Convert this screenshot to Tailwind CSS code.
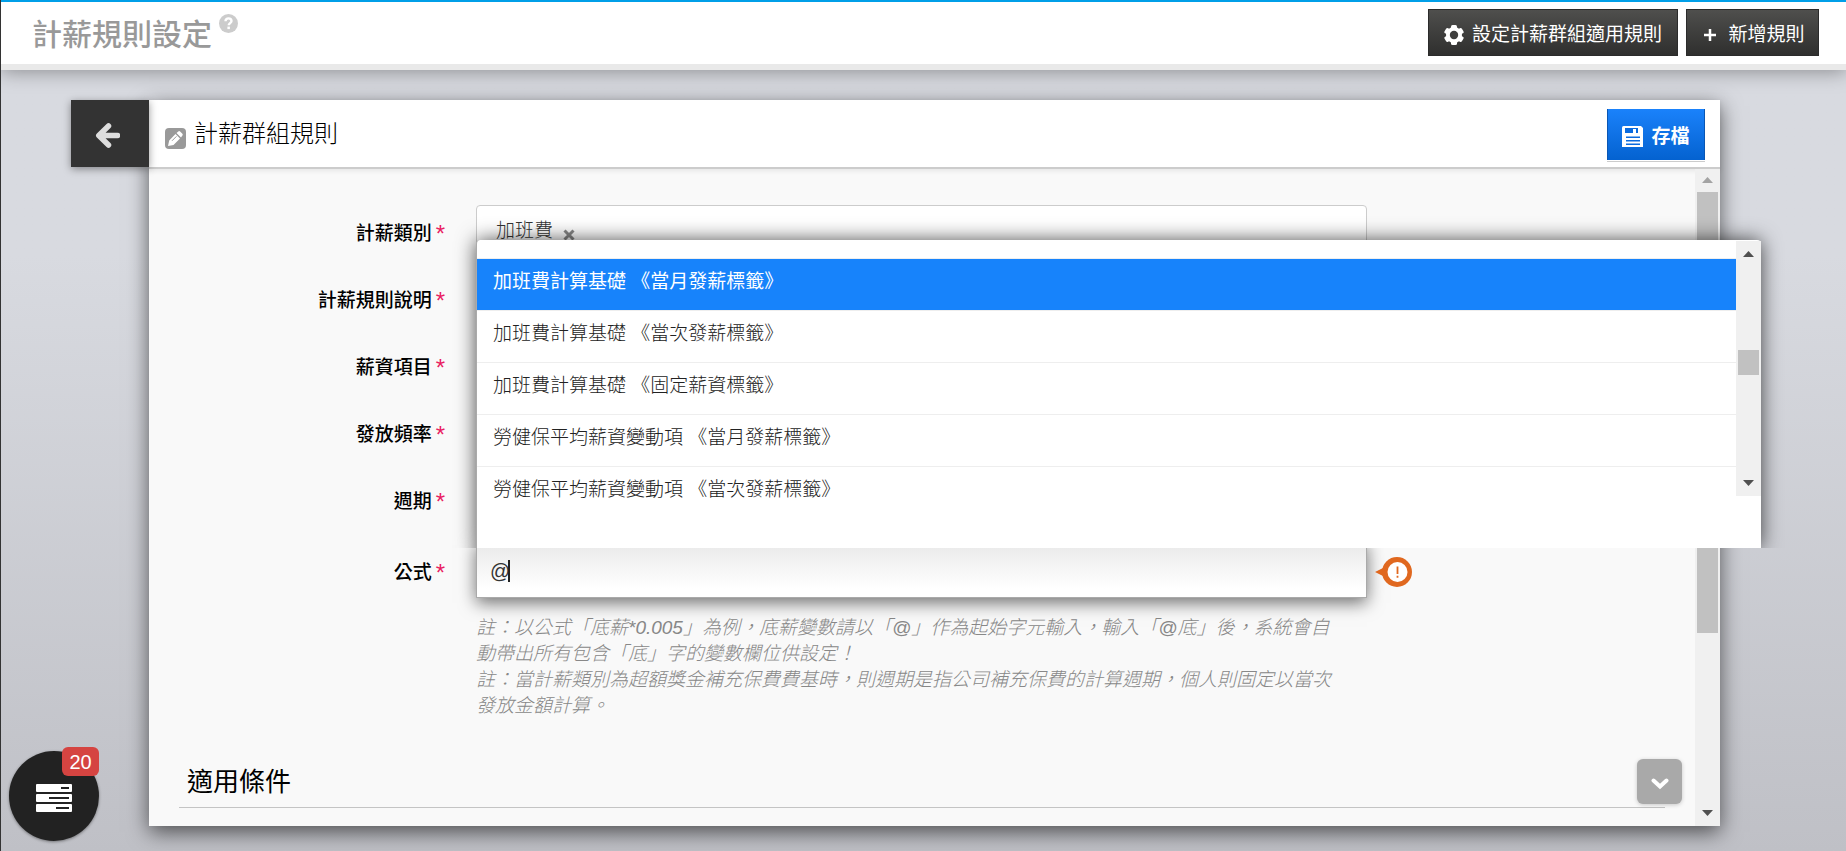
<!DOCTYPE html>
<html lang="zh-Hant">
<head>
    <meta charset="UTF-8">
    <meta name="viewport" content="width=device-width, initial-scale=1.0">
    <title>計薪規則設定</title>
    <script src="https://cdn.jsdelivr.net/npm/@tailwindcss/browser@4"></script>
</head>
<body class="font-['Liberation_Sans','Noto_Sans_CJK_TC',sans-serif] text-[19px] leading-[26px] text-black">
    <div class="flex h-screen flex-col overflow-hidden border-l border-[#333] bg-linear-to-b from-[#d8dae0] from-30% to-[#bfc0c6]">

        <!-- 頁首 -->
        <header class="relative flex h-[70px] shrink-0 items-start border-t-2 border-b-6 border-t-[#009fe8] border-b-[#e9e9e9] bg-white pr-[27px] pl-[31px] shadow-[0_2px_18px_rgba(0,0,0,0.35)]">
            <h1 class="pt-[13px] text-[30px] leading-[40px] font-medium text-[#999]">計薪規則設定</h1>
            <a href="#" aria-label="說明" class="mt-3 ml-[7px]">
                <svg class="size-[19px]" viewBox="0 0 19 19"><circle cx="9.500" cy="9.500" r="9.500" fill="#ccc"/><path d="M6.500 7.300C6.500 5.400 7.700 4.400 9.500 4.400s3 1.100 3 2.700c0 2-2.800 2-2.800 4.200" fill="none" stroke="#fff" stroke-width="2.400"/><rect x="8.400" y="12.600" width="2.500" height="2.500" fill="#fff"/></svg>
            </a>
            <div class="mt-[7px] ml-auto flex gap-2 text-white">
                <button class="flex h-[47px] w-[250px] items-center justify-center gap-2 border border-[#2b2b2b] bg-linear-to-b from-[#4f4f4d] to-[#2f2f2e] pt-1">
                    <svg class="size-5" viewBox="0 0 20 20"><g fill="#fff"><rect x="7" y="0" width="6" height="20" rx="1.500"/><rect x="7" y="0" width="6" height="20" rx="1.500" transform="rotate(60 10 10)"/><rect x="7" y="0" width="6" height="20" rx="1.500" transform="rotate(120 10 10)"/><circle cx="10" cy="10" r="8"/></g><circle cx="10" cy="10" r="4.200" fill="#3e3e3d"/></svg>
                    設定計薪群組適用規則
                </button>
                <button class="flex h-[47px] w-[133px] items-center justify-center gap-3 border border-[#2b2b2b] bg-linear-to-b from-[#4f4f4d] to-[#2f2f2e] pt-1 pl-1">
                    <svg class="size-3" viewBox="0 0 12 12"><path d="M6 0v12M0 6h12" stroke="#fff" stroke-width="2.500"/></svg>
                    新增規則
                </button>
            </div>
        </header>

        <main class="flex min-h-0 flex-1 items-start pt-[30px] pr-[126px] pb-[25px] pl-[70px]">
            <button aria-label="返回" class="relative z-10 flex h-[67px] w-[78px] shrink-0 items-center justify-center bg-[#333] pt-1 pr-[6px] shadow-[0_2px_8px_rgba(0,0,0,0.4)]">
                <svg class="h-[25px] w-[25px]" viewBox="0 0 25 25"><path d="M13.500 3L3.800 12.500l9.700 9.500M5 12.500h17.500" fill="none" stroke="#ddd" stroke-width="5.500" stroke-linecap="round" stroke-linejoin="round"/></svg>
            </button>

            <section class="flex h-full min-w-0 flex-1 flex-col bg-[#f9f9f9] shadow-[0_6px_20px_rgba(0,0,0,0.6)]">
                <div class="flex h-[69px] shrink-0 items-center border-b-2 border-[#ccc] bg-white pr-[15px] pl-4 shadow-[0_2px_5px_rgba(0,0,0,0.08)]">
                    <svg class="mt-[10px] size-[21px]" viewBox="0 0 21 21"><rect width="21" height="21" rx="4" fill="#999"/><path d="M3 18l1.200-5.500L10.500 6l4.500 4.500L8.500 17zM11.500 5l1.800-1.600q.9-.7 1.800.1l2.300 2.300q.8.900 0 1.800L16 9.500z" fill="#fff"/><path d="M7 12.800l4.500-4.500" stroke="#999" stroke-width="1"/></svg>
                    <h2 class="ml-2 text-[24px] leading-[32px] font-light">計薪群組規則</h2>
                    <button class="mt-[2px] ml-auto flex h-[51px] w-[98px] items-center justify-center gap-2 border-x border-[#0a56b3] bg-linear-to-b from-[#1a82fb] to-[#0462d0] pt-1 font-bold text-white shadow-[0_1px_0_#fff,0_2px_0_#ccc]">
                        <svg class="h-[21px] w-[21px]" viewBox="0 0 21 21"><path d="M0 1.500Q0 0 1.500 0H19l2 2v19H0z" fill="#fff"/><path d="M3 2h13v5H3zM4 10.500h14v1.500H4zM4 14h14v1.500H4zM4 17.500h14v1.500H4z" fill="#0a6bdf"/><rect x="11" y="3" width="3" height="4" fill="#fff"/></svg>
                        存檔
                    </button>
                </div>

                <div class="flex min-h-0 flex-1">
                    <div class="min-w-0 flex-1 pt-9">
                        <form class="grid grid-cols-[296px_minmax(0,1fr)] gap-x-[31px] gap-y-[13px] pr-[328px]">
                            <label for="category" class="flex items-center justify-end gap-1 pt-1 font-medium">計薪類別 <span class="text-[24px] text-[#e91e63]">*</span></label>
                            <div id="category" class="flex h-[54px] items-center rounded border border-[#ccc] bg-white pb-[2px] pl-[19px] font-light text-[#333]">
                                加班費
                                <button type="button" aria-label="移除" class="mt-2 ml-[10px]"><svg class="size-3" viewBox="0 0 12 12"><path d="M1.500 1.500l9 9M10.500 1.500l-9 9" stroke="#888" stroke-width="3"/></svg></button>
                            </div>

                            <label for="description" class="flex items-center justify-end gap-1 pt-1 font-medium">計薪規則說明 <span class="text-[24px] text-[#e91e63]">*</span></label>
                            <input id="description" type="text" class="h-[54px] rounded border border-[#ccc] bg-white px-3">

                            <label for="item" class="flex items-center justify-end gap-1 pt-1 font-medium">薪資項目 <span class="text-[24px] text-[#e91e63]">*</span></label>
                            <input id="item" type="text" class="h-[54px] rounded border border-[#ccc] bg-white px-3">

                            <label for="frequency" class="flex items-center justify-end gap-1 pt-1 font-medium">發放頻率 <span class="text-[24px] text-[#e91e63]">*</span></label>
                            <input id="frequency" type="text" class="h-[54px] rounded border border-[#ccc] bg-white px-3">

                            <label for="period" class="flex items-center justify-end gap-1 pt-1 font-medium">週期 <span class="text-[24px] text-[#e91e63]">*</span></label>
                            <input id="period" type="text" class="h-[54px] rounded border border-[#ccc] bg-white px-3">

                            <label for="formula" class="flex items-center justify-end gap-1 self-start pt-5 font-medium">公式 <span class="text-[24px] text-[#e91e63]">*</span></label>
                            <div>
                                <div class="relative">
                                    <input id="formula" type="text" value="@" class="block h-[58px] w-full border border-[#aaa] bg-linear-to-b from-[#e8e8e8] to-white to-85% px-[13px] pt-1 text-[20px] text-[#333] shadow-[0_5px_16px_rgba(0,0,0,0.55)] outline-none">
                                    <!-- 輸入游標 -->
                                    <span class="absolute top-5 left-8 h-[22px] w-[2px] bg-[#222]"></span>
                                    <!-- 警告圖示 -->
                                    <svg class="absolute top-[17px] left-full ml-2 h-[30px] w-[37px]" viewBox="0 0 37 30"><path d="M0 15l10-5v10z" fill="#e0681f"/><circle cx="22" cy="15" r="15" fill="#e0681f"/><circle cx="22.500" cy="15" r="10" fill="#fff"/><path d="M22.500 9.500v7.500M22.500 18.800v1.900" stroke="#e0681f" stroke-width="1.800"/></svg>

                                    <!-- 變數選單 -->
                                    <div class="absolute -right-[394px] bottom-[50px] left-0 z-20 h-[308px] rounded-t border-l border-[#aaa] bg-white shadow-[0_0_20px_rgba(0,0,0,0.7)] [clip-path:inset(-30px_-30px_0_-30px)]">
                                        <div class="mt-px flex h-[255px]">
                                            <ul class="flex-1 font-light text-[#222]">
                                                <li class="h-[18px] border-b border-[#eee]"></li>
                                                <li class="h-[52px] border-b border-[#eee] bg-[#1783fb] px-4 pt-[10px] font-normal text-white">加班費計算基礎 《當月發薪標籤》</li>
                                                <li class="h-[52px] border-b border-[#eee] px-4 pt-[10px]">加班費計算基礎 《當次發薪標籤》</li>
                                                <li class="h-[52px] border-b border-[#eee] px-4 pt-[10px]">加班費計算基礎 《固定薪資標籤》</li>
                                                <li class="h-[52px] border-b border-[#eee] px-4 pt-[10px]">勞健保平均薪資變動項 《當月發薪標籤》</li>
                                                <li class="h-[52px] px-4 pt-[10px]">勞健保平均薪資變動項 《當次發薪標籤》</li>
                                            </ul>
                                            <div class="flex w-[25px] flex-col items-center bg-[#f0f0f0] py-[10px]">
                                                <svg class="h-[6px] w-[11px]" viewBox="0 0 11 6"><path d="M0 6L5.500 0 11 6z" fill="#505050"/></svg>
                                                <div class="mt-[93px] h-[25px] w-[21px] bg-[#c1c1c1]"></div>
                                                <svg class="mt-auto h-[6px] w-[11px]" viewBox="0 0 11 6"><path d="M0 0h11L5.500 6z" fill="#505050"/></svg>
                                            </div>
                                        </div>
                                    </div>
                                </div>
                                <p class="mt-[17px] font-light whitespace-nowrap text-[#888] italic">
                                    註：以公式「底薪*0.005」為例，底薪變數請以「@」作為起始字元輸入，輸入「@底」後，系統會自<br>
                                    動帶出所有包含「底」字的變數欄位供設定！<br>
                                    註：當計薪類別為超額獎金補充保費費基時，則週期是指公司補充保費的計算週期，個人則固定以當次<br>
                                    發放金額計算。
                                </p>
                            </div>
                        </form>

                        <div class="mt-10 mr-[30px] ml-[30px] flex items-start">
                            <h3 class="h-[49px] min-w-0 flex-1 border-b border-[#c4c4c4] pt-1 pl-2 text-[26px] leading-[38px]">適用條件</h3>
                            <button aria-label="展開" class="-mr-[17px] -ml-7 flex size-[45px] items-center justify-center rounded-md bg-[#a9a9a9] pt-1 shadow-[0_1px_4px_rgba(0,0,0,0.2)]">
                                <svg class="h-[12px] w-[18px]" viewBox="0 0 18 12"><path d="M2.500 2.500L9 8.500l6.500-6" fill="none" stroke="#fff" stroke-width="4" stroke-linecap="round"/></svg>
                            </button>
                        </div>
                    </div>

                    <!-- 捲軸 -->
                    <div class="flex w-[25px] shrink-0 flex-col items-center bg-[#f0f0f0] pt-2 pb-[10px]">
                        <svg class="h-[6px] w-[11px]" viewBox="0 0 11 6"><path d="M0 6L5.500 0 11 6z" fill="#a3a3a3"/></svg>
                        <div class="mt-[9px] h-[441px] w-[21px] bg-[#c1c1c1]"></div>
                        <svg class="mt-auto h-[6px] w-[11px]" viewBox="0 0 11 6"><path d="M0 0h11L5.500 6z" fill="#505050"/></svg>
                    </div>
                </div>
            </section>
        </main>
    </div>

    <!-- 待辦浮動按鈕 -->
    <button aria-label="待辦事項" class="fixed bottom-[10px] left-[9px] z-30 flex size-[90px] items-center justify-center rounded-full bg-[#222] pt-1 shadow-[0_1px_3px_rgba(0,0,0,0.4)]">
        <svg class="h-[28px] w-[36px]" viewBox="0 0 36 28"><g fill="#fff"><rect width="36" height="8" rx="1"/><rect y="10" width="36" height="8" rx="1"/><rect y="20" width="36" height="8" rx="1"/></g><path d="M25 4h8M13 14h20M20 24h13" stroke="#222" stroke-width="2"/></svg>
        <span class="absolute -top-1 right-0 flex h-[29px] w-[37px] items-center justify-center rounded-md bg-[#d54441] text-[20px] text-white">20</span>
    </button>
</body>
</html>
